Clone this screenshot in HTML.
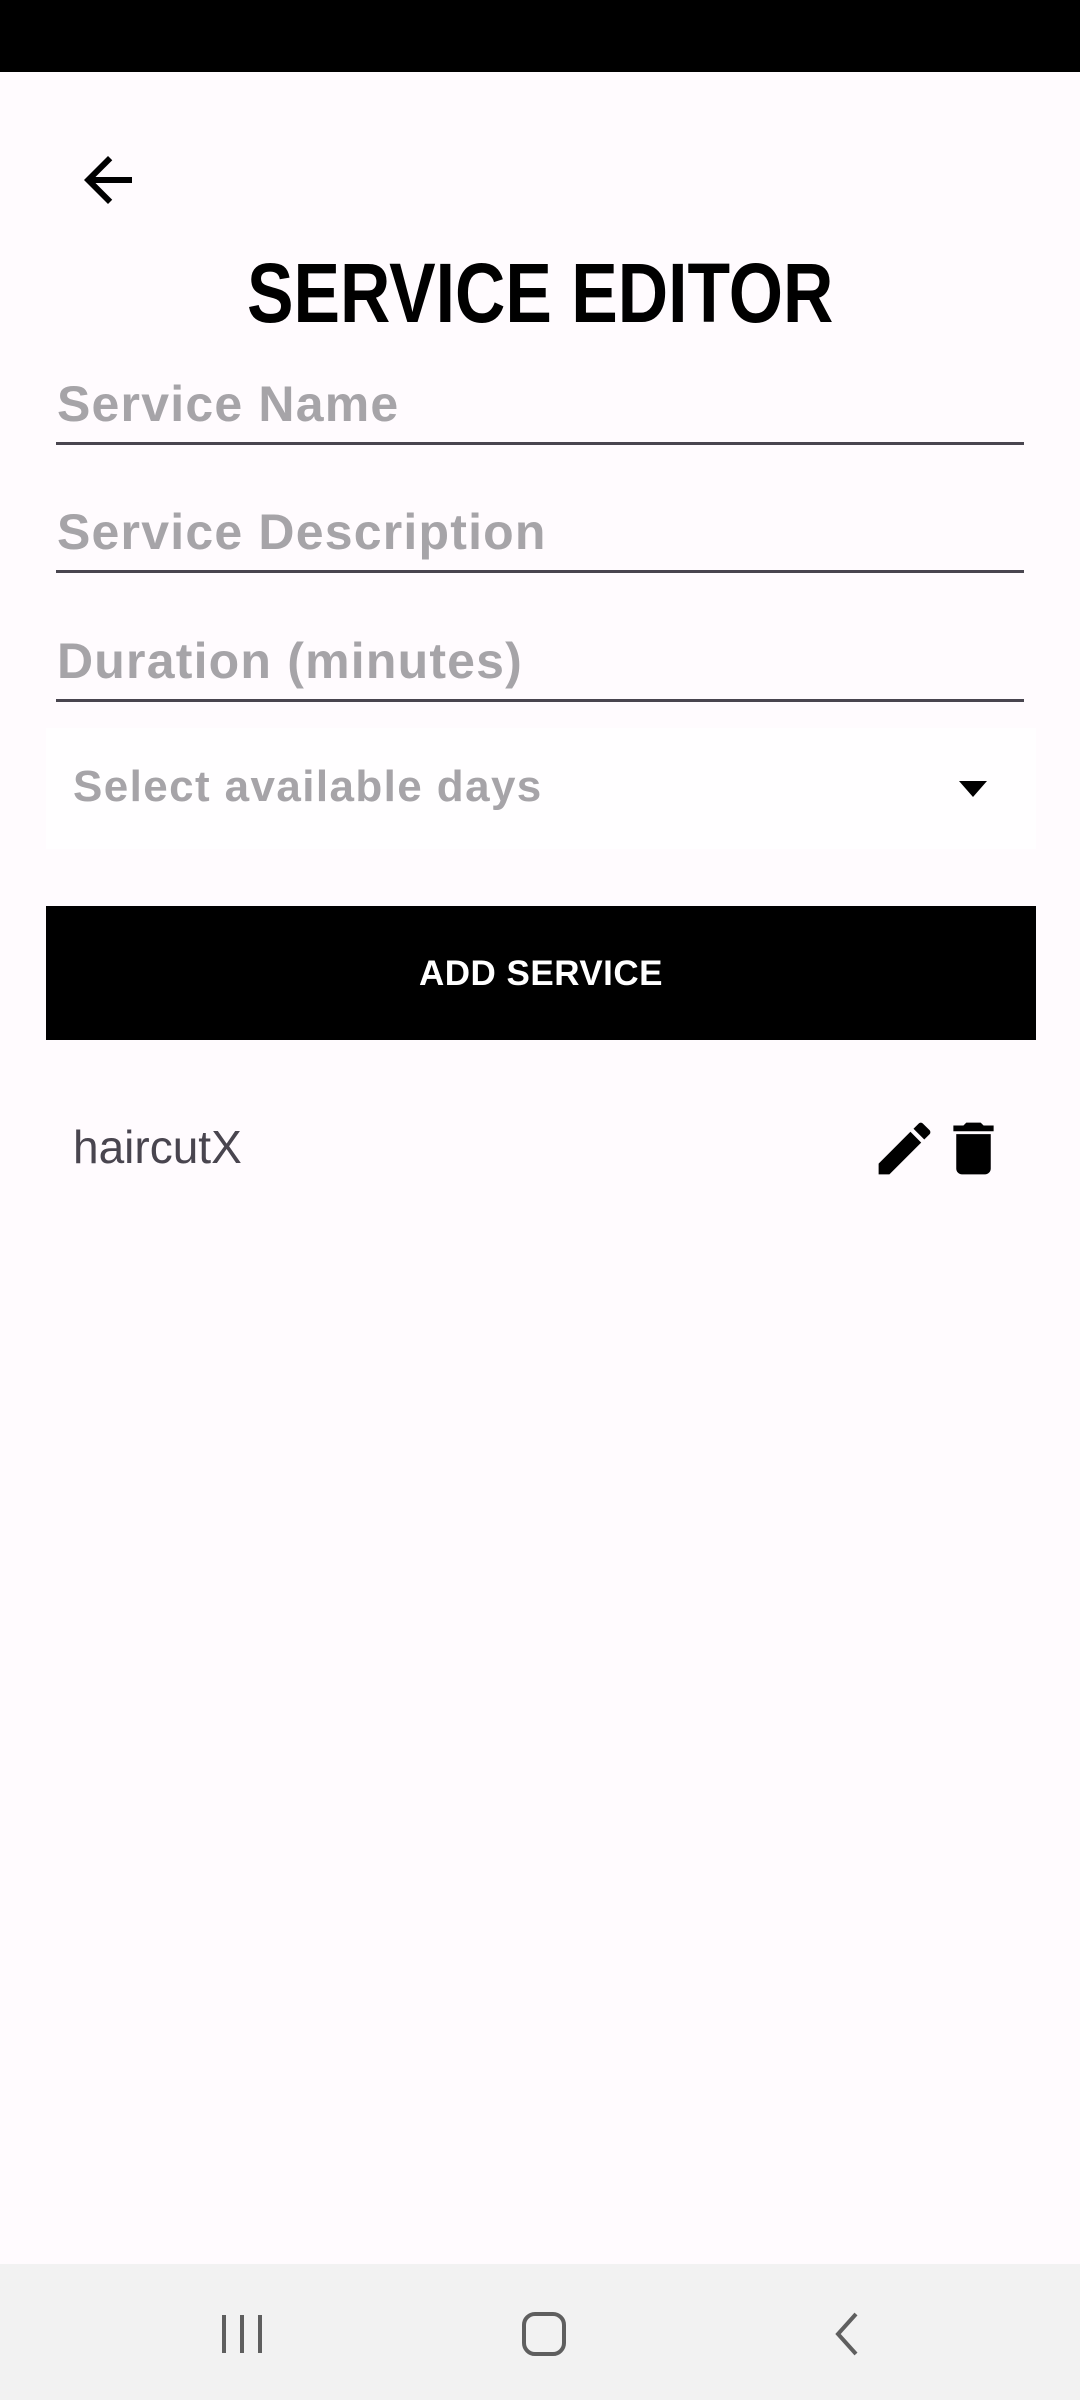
<!DOCTYPE html>
<html><head><meta charset="utf-8"><style>
*{margin:0;padding:0;box-sizing:border-box}
body{width:1080px;height:2400px;background:#fffbfe;position:relative;overflow:hidden;font-family:"Liberation Sans",sans-serif}
.abs{position:absolute}
.ph{position:absolute;left:57px;color:#a6a4a8;font-weight:bold;font-size:50px;letter-spacing:1.2px;white-space:nowrap}
.line{position:absolute;left:56px;width:968px;height:3px;background:#49454f}
</style></head><body>
<div class="abs" style="left:0;top:0;width:1080px;height:72px;background:#000"></div>
<svg class="abs" style="left:72px;top:144px" width="72" height="72" viewBox="0 0 24 24"><path d="M20 11H7.83l5.59-5.59L12 4l-8 8 8 8 1.41-1.41L7.83 13H20v-2z" fill="#000"/></svg>
<div class="abs" style="left:0;width:1080px;top:248px;text-align:center;font-weight:bold;font-size:84px;line-height:90px"><span style="display:inline-block;transform:scaleX(0.83)">SERVICE EDITOR</span></div>
<div class="ph" style="top:375px">Service Name</div>
<div class="line" style="top:442px"></div>
<div class="ph" style="top:503px">Service Description</div>
<div class="line" style="top:570px"></div>
<div class="ph" style="top:632px">Duration (minutes)</div>
<div class="line" style="top:699px"></div>
<div class="abs" style="left:46px;top:728px;width:990px;height:121px;background:#fffeff"></div>
<div class="abs" style="left:73px;top:762px;color:#a6a4a8;font-weight:bold;font-size:44px;letter-spacing:1.4px;white-space:nowrap">Select available days</div>
<svg class="abs" style="left:959px;top:781px" width="28" height="16" viewBox="0 0 28 16"><path d="M0 0H28L14 16Z" fill="#000"/></svg>
<div class="abs" style="left:46px;top:906px;width:990px;height:134px;background:#000;color:#fff;font-size:35px;letter-spacing:0.5px;text-align:center;line-height:136px;font-weight:bold">ADD SERVICE</div>
<div class="abs" style="left:73px;top:1120px;font-size:46px;color:#49454f">haircutX</div>
<svg class="abs" style="left:870px;top:1114px" width="69" height="69" viewBox="0 0 24 24"><path d="M3 17.25V21h3.75L17.81 9.94l-3.75-3.75L3 17.25zM20.71 7.04a1 1 0 0 0 0-1.41l-2.34-2.34a1 1 0 0 0-1.41 0l-1.83 1.83 3.75 3.75 1.83-1.83z" fill="#000"/></svg>
<svg class="abs" style="left:939px;top:1114px" width="69" height="69" viewBox="0 0 24 24"><path d="M6 19c0 1.1.9 2 2 2h8c1.1 0 2-.9 2-2V7H6v12zM19 4h-3.5l-1-1h-5l-1 1H5v2h14V4z" fill="#000"/></svg>
<div class="abs" style="left:0;top:2264px;width:1080px;height:136px;background:#f2f2f2"></div>
<svg class="abs" style="left:218px;top:2310px" width="48" height="48" viewBox="0 0 48 48" stroke="#5f5f5f" stroke-width="4" fill="none"><path d="M6 5v38M24 5v38M42 5v38"/></svg>
<svg class="abs" style="left:520px;top:2310px" width="48" height="48" viewBox="0 0 48 48"><rect x="4" y="4" width="40" height="40" rx="11" stroke="#5f5f5f" stroke-width="4" fill="none"/></svg>
<svg class="abs" style="left:826px;top:2310px" width="40" height="48" viewBox="0 0 40 48"><path d="M30 4L12 24l18 20" stroke="#5f5f5f" stroke-width="4" fill="none"/></svg>
</body></html>
